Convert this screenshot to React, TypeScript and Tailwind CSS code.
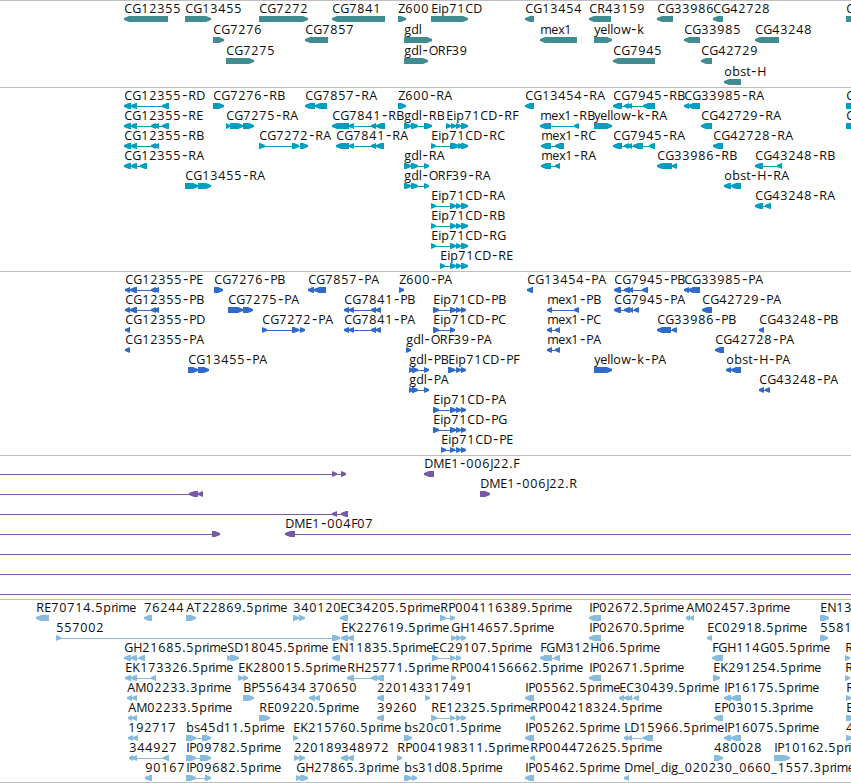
type Feature = {
  name?: string;
  row: number;
  dir: "<" | ">";
  // [start, end] blocks, left to right
  blocks: number[][];
  // open ends run past the edge of the view
  from?: number;
  to?: number;
};

const VIEW_WIDTH = 851;

const ADVANCES: Record<string, number> = {
  A: 8, B: 8, C: 8, D: 9, E: 7, F: 6, G: 9, H: 9, I: 3, J: 3, K: 8, L: 6, M: 11, N: 9, O: 9,
  P: 7, R: 8, S: 7, T: 8, Z: 7, b: 8, c: 6, d: 7.5, e: 7, g: 7, i: 3, k: 7, l: 3, m: 11, o: 8,
  p: 8, r: 4, s: 6, t: 4, w: 9, x: 6, y: 6, "-": 7, ".": 4, _: 6.5,
};

const f = (row: number, dir: "<" | ">", name: string, ...blocks: number[][]): Feature => ({
  row,
  dir,
  name,
  blocks,
});

const genes: Feature[] = [
  f(0, "<", "CG12355", [124, 168]),
  f(0, ">", "CG13455", [185, 211]),
  f(0, ">", "CG7272", [259, 308]),
  f(0, "<", "CG7841", [332, 385]),
  f(0, ">", "Z600", [398, 406]),
  f(0, ">", "Eip71CD", [431, 468]),
  f(0, "<", "CG13454", [525, 534]),
  f(0, "<", "CR43159", [589, 611]),
  f(0, "<", "CG33986", [657, 673]),
  f(0, "<", "CG42728", [713, 723]),
  f(0, ">", "C", [846, 870]),
  f(1, ">", "CG7276", [213, 224]),
  f(1, "<", "CG7857", [305, 328]),
  f(1, ">", "gdl", [404, 432]),
  f(1, "<", "mex1", [540, 577]),
  f(1, ">", "yellow-k", [594, 612]),
  f(1, "<", "CG33985", [684, 700]),
  f(1, "<", "CG43248", [755, 779]),
  f(2, ">", "CG7275", [226, 254]),
  f(2, ">", "gdl-ORF39", [404, 428]),
  f(2, "<", "CG7945", [613, 655]),
  f(2, "<", "CG42729", [701, 712]),
  f(3, "<", "obst-H", [724, 741]),
];

const transcripts: Feature[] = [
  f(0, "<", "CG12355-RD", [124, 131], [131, 137], [162, 169]),
  f(0, ">", "CG7276-RB", [213, 224]),
  f(0, "<", "CG7857-RA", [305, 315], [315, 327]),
  f(0, ">", "Z600-RA", [398, 406]),
  f(0, "<", "CG13454-RA", [525, 534]),
  f(0, "<", "CG7945-RB", [613, 622], [624, 629], [628, 632], [643, 655]),
  f(0, "<", "CG33985-RA", [684, 689], [688, 700]),
  f(0, ">", "C", [846, 870]),
  f(1, "<", "CG12355-RE", [124, 131], [131, 137], [151, 156], [154, 159], [162, 169]),
  f(1, ">", "CG7275-RA", [226, 230], [230, 243], [243, 254]),
  f(1, "<", "CG7841-RB", [332, 349], [349, 354], [371, 376], [376, 385]),
  f(1, ">", "gdl-RB", [404, 411], [411, 418], [424, 432]),
  f(1, ">", "Eip71CD-RF", [446, 451], [451, 456], [456, 461], [461, 468]),
  f(1, "<", "mex1-RB", [540, 551], [574, 579]),
  f(1, ">", "yellow-k-RA", [594, 612]),
  f(1, "<", "CG42729-RA", [701, 712]),
  f(1, ">", "C", [846, 870]),
  f(2, "<", "CG12355-RB", [124, 131], [131, 137], [151, 156], [154, 159]),
  f(2, ">", "CG7272-RA", [259, 265], [292, 299], [300, 308]),
  f(2, "<", "CG7841-RA", [336, 349], [349, 354], [371, 376], [376, 384]),
  f(2, ">", "Eip71CD-RC", [431, 436], [450, 459], [458, 463], [461, 468]),
  f(2, "<", "mex1-RC", [541, 551], [555, 564]),
  f(2, "<", "CG7945-RA", [613, 622], [624, 629], [628, 632], [633, 643], [649, 655]),
  f(2, "<", "CG42728-RA", [713, 723]),
  f(3, "<", "CG12355-RA", [124, 131], [131, 137], [140, 147]),
  f(3, ">", "gdl-RA", [404, 411], [411, 418], [424, 429]),
  f(3, "<", "mex1-RA", [541, 551], [555, 560]),
  f(3, "<", "CG33986-RB", [657, 672], [672, 677]),
  f(3, "<", "CG43248-RB", [755, 763], [777, 782]),
  f(4, ">", "CG13455-RA", [185, 198], [198, 211]),
  f(4, ">", "gdl-ORF39-RA", [404, 411], [411, 418], [424, 429]),
  f(4, "<", "obst-H-RA", [724, 731], [731, 741]),
  f(5, ">", "Eip71CD-RA", [431, 436], [450, 456], [456, 461], [461, 468]),
  f(5, "<", "CG43248-RA", [755, 763], [765, 771]),
  f(6, ">", "Eip71CD-RB", [431, 436], [450, 456], [456, 461], [461, 468]),
  f(7, ">", "Eip71CD-RG", [431, 436], [450, 456], [456, 461], [461, 468]),
  f(8, ">", "Eip71CD-RE", [440, 445], [450, 456], [456, 461], [461, 468]),
];

const proteins: Feature[] = [
  f(0, "<", "CG12355-PE", [125, 130], [130, 137], [151, 156], [154, 159]),
  f(0, ">", "CG7276-PB", [214, 223]),
  f(0, "<", "CG7857-PA", [308, 314], [314, 326]),
  f(0, ">", "Z600-PA", [399, 404]),
  f(0, "<", "CG13454-PA", [527, 533]),
  f(0, "<", "CG7945-PB", [614, 621], [624, 630], [629, 633], [642, 648]),
  f(0, "<", "CG33985-PA", [684, 689], [688, 700]),
  f(1, "<", "CG12355-PB", [125, 130], [130, 137], [151, 156], [154, 159]),
  f(1, ">", "CG7275-PA", [228, 243], [243, 253]),
  f(1, "<", "CG7841-PB", [344, 349], [349, 354], [371, 376], [376, 381]),
  f(1, ">", "Eip71CD-PB", [433, 439], [450, 456], [456, 461], [461, 466]),
  f(1, "<", "mex1-PB", [547, 552], [574, 579]),
  f(1, "<", "CG7945-PA", [614, 621], [624, 630], [629, 633], [634, 639]),
  f(1, "<", "CG42729-PA", [702, 712]),
  f(2, "<", "CG12355-PD", [125, 130]),
  f(2, ">", "CG7272-PA", [262, 267], [292, 299], [300, 305]),
  f(2, "<", "CG7841-PA", [344, 349], [349, 354], [371, 376], [376, 381]),
  f(2, ">", "Eip71CD-PC", [433, 439], [450, 455]),
  f(2, "<", "mex1-PC", [547, 552], [555, 560]),
  f(2, "<", "CG33986-PB", [657, 671], [672, 677]),
  f(2, "<", "CG43248-PB", [759, 764]),
  f(3, "<", "CG12355-PA", [125, 130]),
  f(3, ">", "gdl-ORF39-PA", [406, 411]),
  f(3, "<", "mex1-PA", [547, 552], [555, 560]),
  f(3, "<", "CG42728-PA", [715, 724]),
  f(4, ">", "CG13455-PA", [188, 198], [198, 209]),
  f(4, ">", "gdl-PB", [409, 413], [412, 418], [424, 429]),
  f(4, ">", "Eip71CD-PF", [448, 455], [456, 461], [461, 466]),
  f(4, ">", "yellow-k-PA", [594, 612]),
  f(4, "<", "obst-H-PA", [726, 731], [731, 741]),
  f(5, ">", "gdl-PA", [409, 413], [412, 418], [424, 429]),
  f(5, "<", "CG43248-PA", [759, 764], [765, 770]),
  f(6, ">", "Eip71CD-PA", [433, 439], [450, 456], [456, 461], [461, 466]),
  f(7, ">", "Eip71CD-PG", [433, 439], [450, 456], [456, 461], [461, 466]),
  f(8, ">", "Eip71CD-PE", [441, 446], [450, 455], [456, 461], [461, 466]),
];

const clones: Feature[] = [
  { row: 0, dir: ">", blocks: [[332, 337], [341, 346]], from: 0 },
  f(0, "<", "DME1-006J22.F", [424, 434]),
  { row: 1, dir: "<", blocks: [[189, 198], [198, 203]], from: 0 },
  f(1, ">", "DME1-006J22.R", [480, 490]),
  { row: 2, dir: "<", blocks: [[332, 337], [341, 348]], from: 0 },
  { row: 3, dir: ">", blocks: [[212, 220]], from: 0 },
  { row: 3, dir: "<", name: "DME1-004F07", blocks: [[285, 295]], to: VIEW_WIDTH },
  { row: 4, dir: ">", blocks: [], from: 0, to: VIEW_WIDTH },
  { row: 5, dir: ">", blocks: [], from: 0, to: VIEW_WIDTH },
  { row: 6, dir: ">", blocks: [], from: 0, to: VIEW_WIDTH },
];

const ests: Feature[] = [
  f(0, "<", "RE70714.5prime", [36, 49]),
  f(0, "<", "76244", [144, 152]),
  f(0, ">", "AT22869.5prime", [186, 196]),
  f(0, ">", "340120", [293, 299], [299, 305]),
  f(0, "<", "EC34205.5prime", [340, 348]),
  f(0, ">", "RP004116389.5prime", [440, 446], [450, 455]),
  f(0, "<", "IP02672.5prime", [589, 601]),
  f(0, "<", "AM02457.3prime", [686, 690], [690, 694]),
  f(0, ">", "EN13", [820, 829]),
  f(1, ">", "557002", [56, 61], [332, 340]),
  f(1, "<", "EK227619.5prime", [341, 348], [348, 354]),
  f(1, ">", "GH14657.5prime", [451, 456], [456, 461], [461, 466]),
  f(1, "<", "IP02670.5prime", [589, 601]),
  f(1, "<", "EC02918.5prime", [707, 712]),
  f(1, ">", "5581", [820, 828]),
  f(2, "<", "GH21685.5prime", [124, 131], [131, 137], [139, 145]),
  f(2, ">", "SD18045.5prime", [227, 231], [230, 239]),
  f(2, "<", "EN11835.5prime", [332, 340]),
  f(2, ">", "EC29107.5prime", [432, 438], [450, 455], [456, 461]),
  f(2, "<", "FGM312H06.5prime", [540, 552], [554, 560]),
  f(2, "<", "FGH114G05.5prime", [712, 723]),
  f(2, ">", "R", [845, 850]),
  f(3, "<", "EK173326.5prime", [125, 131], [131, 137], [151, 156]),
  f(3, ">", "EK280015.5prime", [238, 243], [243, 248]),
  f(3, "<", "RH25771.5prime", [347, 354], [371, 377], [376, 384]),
  f(3, ">", "RP004156662.5prime", [451, 456]),
  f(3, "<", "IP02671.5prime", [589, 601]),
  f(3, ">", "EK291254.5prime", [713, 720]),
  f(3, ">", "R", [845, 850]),
  f(4, "<", "AM02233.3prime", [127, 132], [132, 137]),
  f(4, ">", "BP556434", [243, 254]),
  f(4, "<", "370650", [309, 315], [315, 320]),
  f(4, "<", "220143", [377, 384]),
  f(4, ">", "317491", [425, 430]),
  f(4, "<", "IP05562.5prime", [525, 534]),
  f(4, "<", "EC30439.5prime", [619, 624], [624, 629], [628, 632], [634, 639]),
  f(4, "<", "IP16175.5prime", [724, 731], [731, 741]),
  f(4, ">", "R", [846, 851]),
  f(5, "<", "AM02233.5prime", [128, 132], [132, 137]),
  f(5, ">", "RE09220.5prime", [259, 270]),
  f(5, "<", "39260", [377, 384]),
  f(5, ">", "RE12325.5prime", [431, 437], [450, 455], [456, 461], [461, 466]),
  f(5, "<", "RP004218324.5prime", [530, 535]),
  f(5, "<", "EP03015.3prime", [714, 723]),
  f(5, ">", "E", [846, 854]),
  f(6, "<", "192717", [128, 133], [133, 138]),
  f(6, ">", "bs45d11.5prime", [186, 196], [202, 211]),
  f(6, ">", "EK215760.5prime", [293, 298]),
  f(6, ">", "bs20c01.5prime", [404, 412]),
  f(6, "<", "IP05262.5prime", [525, 534]),
  f(6, "<", "LD15966.5prime", [624, 628], [628, 632], [643, 653]),
  f(6, "<", "IP16075.5prime", [724, 731], [731, 741]),
  f(6, ">", "4", [846, 852]),
  f(7, "<", "344927", [129, 133], [132, 137], [163, 169]),
  f(7, ">", "IP09782.5prime", [186, 196], [200, 211]),
  f(7, ">", "220189", [294, 299], [299, 305]),
  f(7, "<", "348972", [341, 348], [348, 354]),
  f(7, ">", "RP004198311.5prime", [397, 402]),
  f(7, "<", "RP004472625.5prime", [530, 535]),
  f(7, ">", "480028", [714, 723]),
  f(7, ">", "IP10162.5prime", [774, 790]),
  f(8, "<", "90167", [145, 152]),
  f(8, ">", "IP09682.5prime", [186, 196], [205, 211]),
  f(8, ">", "GH27865.3prime", [296, 301], [300, 308]),
  f(8, ">", "bs31d08.5prime", [404, 412], [412, 417]),
  f(8, "<", "IP05462.5prime", [525, 534]),
  f(8, "<", "Dmel_dig_020230_0660_1557.3prime", [624, 629]),
];

// Pointed block, 6px high, tip on the strand side
const blockPoints = (start: number, end: number, top: number, dir: "<" | ">") => {
  const head = Math.min(end - start, 5);
  const mid = top + 3;
  const bottom = top + 6;
  return dir === "<"
    ? `${end},${top} ${start + head},${top} ${start},${mid - 1} ${start},${mid + 1} ${start + head},${bottom} ${end},${bottom}`
    : `${start},${top} ${end - head},${top} ${end},${mid - 1} ${end},${mid + 1} ${end - head},${bottom} ${start},${bottom}`;
};

const Label = ({ text, x, y }: { text: string; x: number; y: number }) => {
  let cursor = x;
  const xs = text.split("").map((char) => {
    const at = cursor;
    cursor += ADVANCES[char] ?? 8;
    return char === "-" ? at - 0.6 : at + 0.2;
  });

  return (
    <text x={xs.join(" ")} y={y} className="fill-[#0c0c0c] font-['Open_Sans',sans-serif] text-[12.5px]">
      {text.split(/(-)/).map((part, i) =>
        part === "-" ? (
          <tspan key={i} className="font-['Liberation_Mono',monospace] text-[14px]">
            -
          </tspan>
        ) : (
          part
        )
      )}
    </text>
  );
};

const Glyph = ({ feature, top }: { feature: Feature; top: number }) => {
  const { blocks, dir } = feature;
  const start = feature.from ?? blocks[0][0];
  const end = feature.to ?? blocks[blocks.length - 1][1];
  const hasLine = blocks.length !== 1 || feature.from !== undefined || feature.to !== undefined;
  const lineStart = dir === "<" && feature.from === undefined ? start + 2 : start;
  const lineEnd = dir === ">" && feature.to === undefined ? end - 2 : end;

  return (
    <g>
      {hasLine && <rect x={lineStart} y={top + 3} width={lineEnd - lineStart} height={1} />}
      {blocks.map(([a, b]) => (
        <polygon key={a} points={blockPoints(a, b, top, dir)} />
      ))}
    </g>
  );
};

type TrackProps = {
  features: Feature[];
  pitch: number;
  className: string;
};

const Track = ({ features, pitch, className }: TrackProps) => (
  <section className={`w-full shrink-0 overflow-hidden border-t border-[#bebebe] ${className}`}>
    <svg className="block h-full w-[851px]" fill="currentColor">
      {features.map((feature, i) => (
        <Glyph key={i} feature={feature} top={15 + feature.row * pitch} />
      ))}
      {features.map(
        (feature, i) =>
          feature.name && (
            <Label key={i} text={feature.name} x={feature.blocks[0][0]} y={12 + feature.row * pitch} />
          )
      )}
    </svg>
  </section>
);

const App = () => {
  return (
    <main className="flex h-[783px] w-[851px] flex-col overflow-hidden border-b border-[#bebebe] bg-white">
      <Track features={genes} pitch={21} className="h-[87px] text-[#408c90]" />
      <Track features={transcripts} pitch={20} className="h-[184px] text-[#009fbf]" />
      <Track features={proteins} pitch={20} className="h-[184px] text-[#306acb]" />
      <Track features={clones} pitch={20} className="h-[144px] text-[#7859a8]" />
      <Track features={ests} pitch={20} className="h-[183px] text-[#86bbdd]" />
    </main>
  );
};

export default App;
